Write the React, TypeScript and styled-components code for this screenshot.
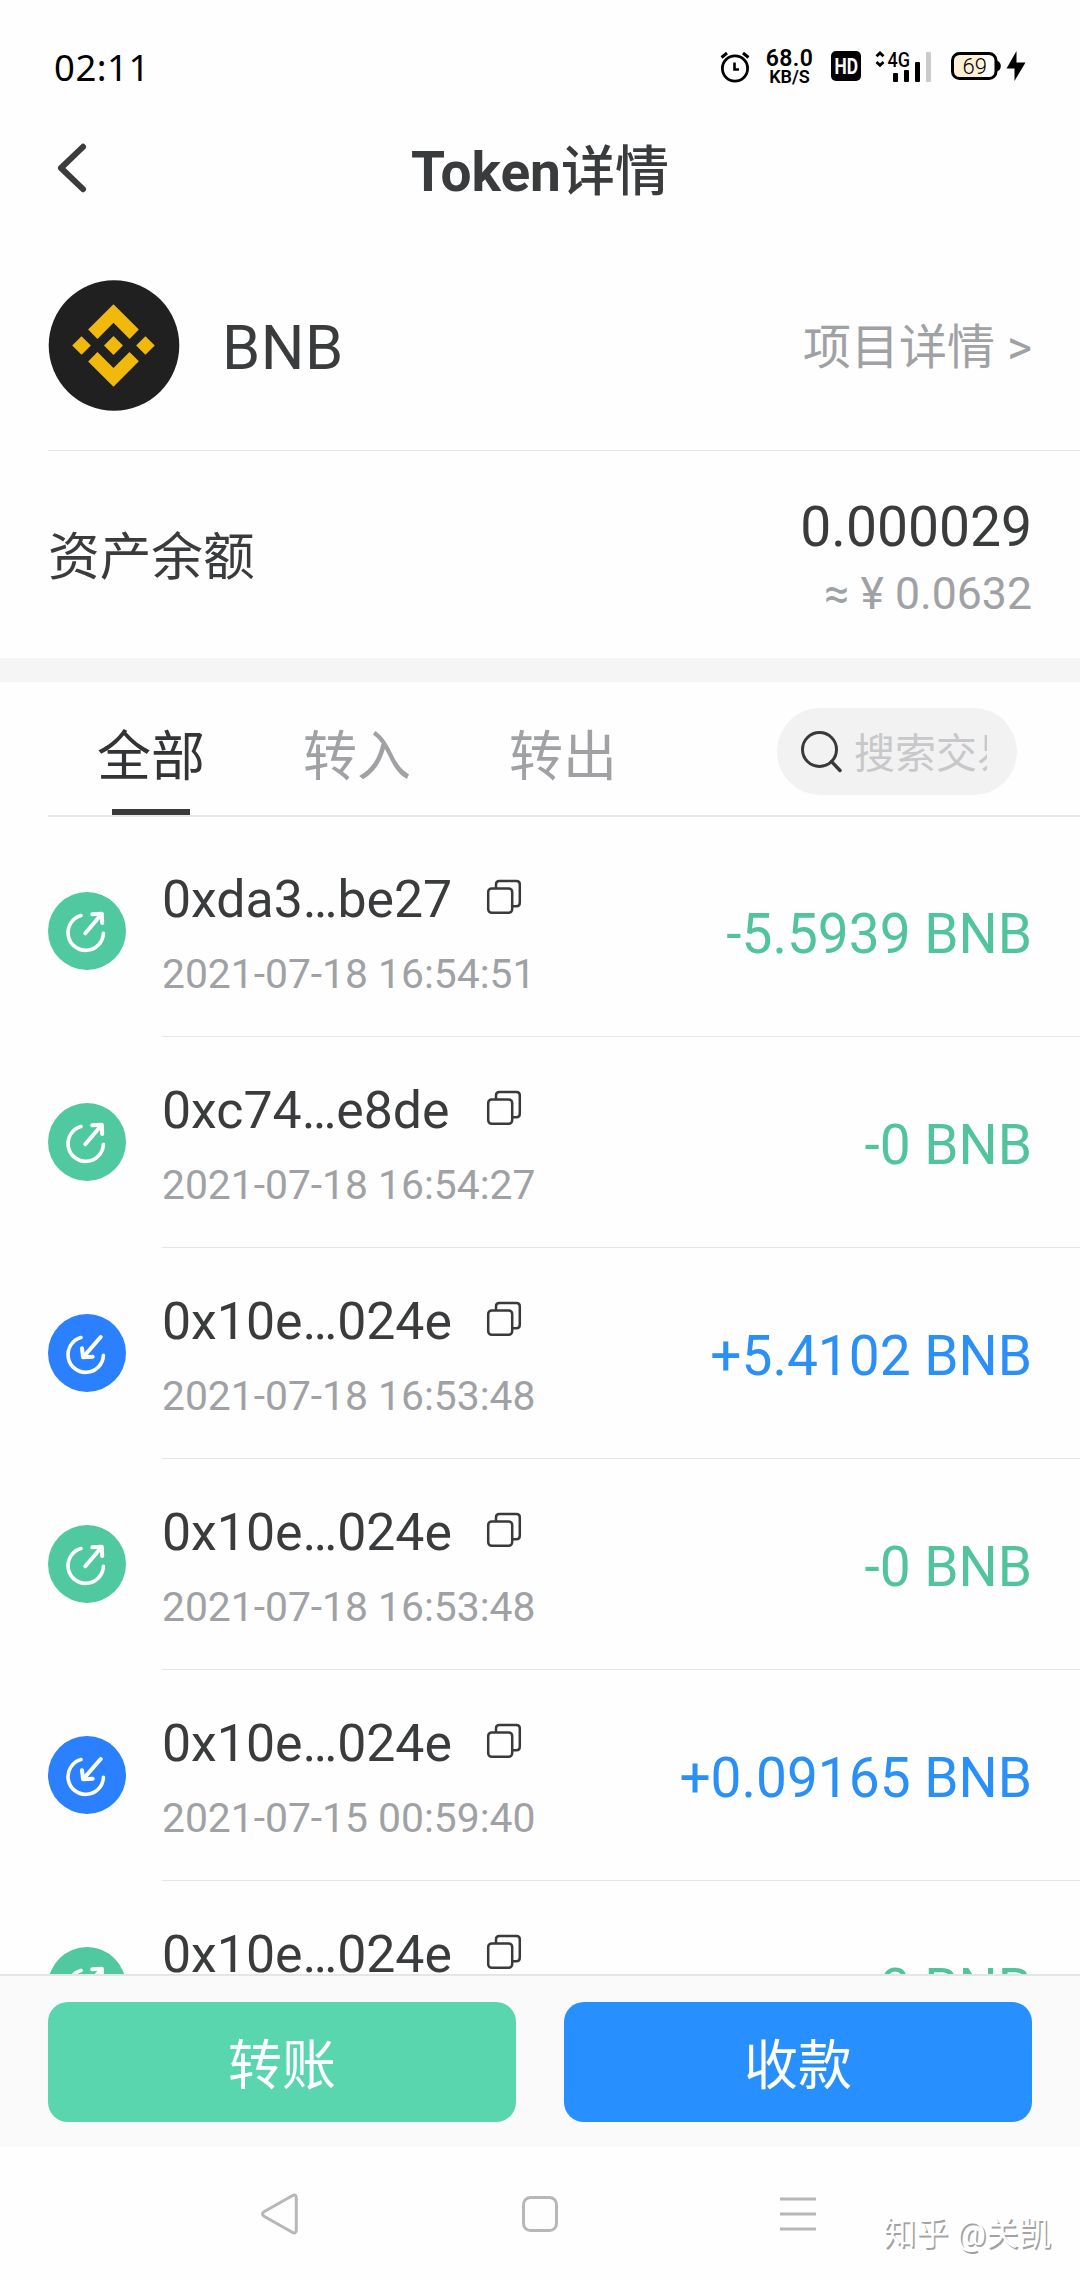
import React from 'react';
import styled, { createGlobalStyle } from 'styled-components';

const colors = {
  ink: '#3a3b3c',
  muted: '#a0a1a4',
  line: '#e6e6e7',
  green: '#52c49d',
  greenBadge: '#50c8a0',
  greenButton: '#59d6ad',
  blue: '#2a8ff6',
  blueBadge: '#2a80fe',
  blueButton: '#278ffe',
};

const GlobalStyle = createGlobalStyle`
  * { box-sizing: border-box; }
  body {
    margin: 0;
    background: #fefefe;
    font-family: Roboto, "Noto Sans CJK SC", sans-serif;
    color: ${colors.ink};
  }
  button { font: inherit; border: 0; padding: 0; background: none; color: inherit; }
  svg { display: block; flex: none; overflow: visible; }
`;

const Screen = styled.div`
  width: 1080px;
  height: 2280px;
  display: flex;
  flex-direction: column;
  overflow: hidden;
  background: #fefefe;
`;

const StatusBar = styled.header`
  height: 108px;
  flex: none;
  padding: 24px 54px 0 54px;
  display: flex;
  align-items: center;
  justify-content: space-between;
  color: #000;
`;

const Clock = styled.time`
  padding-top: 2px;
  font-family: "Noto Sans", sans-serif;
  font-size: 36.5px;
  line-height: 44px;
  letter-spacing: 0.5px;
`;

const StatusIcons = styled.div`
  display: flex;
  align-items: center;
`;

const NetRate = styled.div`
  width: 49px;
  margin: 0 17px 0 15px;
  display: flex;
  flex-direction: column;
  align-items: center;
  font-weight: 600;
  font-size: 23px;
  line-height: 20px;
  letter-spacing: 0.4px;
`;

const NetUnit = styled.span`
  font-size: 18px;
  line-height: 15px;
  letter-spacing: 0;
`;

const TitleBar = styled.div`
  height: 120px;
  flex: none;
  display: grid;
  grid-template-columns: 100px 1fr 100px;
  align-items: center;
`;

const BackButton = styled.button`
  padding-left: 56px;
`;

const Title = styled.h1`
  margin: 0;
  padding-top: 4px;
  text-align: center;
  font-size: 55px;
  line-height: 64px;
  font-weight: 700;
`;

const TitleHan = styled.span`
  font-family: "Noto Sans CJK SC", sans-serif;
  font-size: 54px;
  font-weight: 500;
`;

const TokenRow = styled.section`
  height: 223px;
  flex: none;
  margin-left: 48px;
  padding: 12px 48px 0 0;
  display: flex;
  align-items: center;
  border-bottom: 1px solid ${colors.line};
`;

const TokenName = styled.span`
  flex: 1;
  padding: 6px 0 0 43px;
  font-size: 61.3px;
  line-height: 72px;
  letter-spacing: 0.6px;
`;

const DetailLink = styled.span`
  padding-top: 6px;
  font-size: 48px;
  line-height: 60px;
  color: ${colors.muted};
`;

const BalanceRow = styled.section`
  height: 207px;
  flex: none;
  padding: 8px 48px 0;
  display: flex;
  align-items: center;
  justify-content: space-between;
`;

const BalanceLabel = styled.span`
  margin-top: -1px;
  font-size: 51.7px;
  line-height: 60px;
`;

const BalanceValues = styled.div`
  display: flex;
  flex-direction: column;
  align-items: flex-end;
  gap: 7px;
`;

const Balance = styled.span`
  font-size: 55.2px;
  line-height: 64px;
`;

const Fiat = styled.span`
  font-size: 44.6px;
  line-height: 56px;
  color: ${colors.muted};
`;

const Band = styled.div`
  height: 24px;
  flex: none;
  background: #f5f5f5;
`;

const FilterBar = styled.nav`
  height: 135px;
  flex: none;
  margin-left: 48px;
  padding-right: 63px;
  display: flex;
  align-items: stretch;
  border-bottom: 2px solid #e8e8e9;
`;

const Tab = styled.button<{ $active?: boolean }>`
  width: 206px;
  display: flex;
  flex-direction: column;
  align-items: center;
  justify-content: space-between;
  padding-top: 44px;
  font-size: 54px;
  line-height: 64px;
  color: ${(p) => (p.$active ? '#333435' : colors.muted)};

  &::after {
    content: '';
    width: 78px;
    height: 6px;
    background: ${(p) => (p.$active ? '#3a3a3a' : 'transparent')};
  }
`;

const SearchBox = styled.div`
  width: 240px;
  height: 87px;
  margin: 26px 0 0 auto;
  padding: 0 30px 0 22px;
  display: flex;
  align-items: center;
  border-radius: 44px;
  background: #f2f2f2;
`;

const Placeholder = styled.span`
  flex: 1;
  margin-left: 12px;
  overflow: hidden;
  white-space: nowrap;
  font-size: 41px;
  line-height: 52px;
  padding-top: 4px;
  color: #c8c8ca;
`;

const List = styled.ul`
  flex: 1;
  min-height: 0;
  margin: 0;
  padding: 9px 0 0 48px;
  overflow: hidden;
  list-style: none;
`;

const Item = styled.li`
  height: 211px;
  display: flex;
  align-items: flex-start;
  gap: 36px;
`;

const Badge = styled.span<{ $incoming: boolean }>`
  width: 78px;
  height: 78px;
  margin-top: 66px;
  flex: none;
  border-radius: 50%;
  background: ${(p) => (p.$incoming ? colors.blueBadge : colors.greenBadge)};
`;

const ItemBody = styled.div`
  flex: 1;
  height: 211px;
  padding-right: 48px;
  display: flex;
  justify-content: space-between;
  border-bottom: 1px solid ${colors.line};
`;

const ItemText = styled.div`
  padding-top: 44px;
  display: flex;
  flex-direction: column;
  gap: 20px;
`;

const HashLine = styled.div`
  height: 60px;
  display: grid;
  grid-template-columns: 324px auto;
  justify-content: start;
  align-items: start;
  font-size: 51.8px;
  line-height: 60px;

  svg { margin-top: 9px; }
`;

const Stamp = styled.span`
  font-size: 40.8px;
  line-height: 48px;
  color: ${colors.muted};
`;

const Amount = styled.span<{ $incoming: boolean }>`
  padding-top: 76px;
  font-size: 55px;
  line-height: 64px;
  color: ${(p) => (p.$incoming ? colors.blue : colors.green)};
`;

const Actions = styled.footer`
  height: 173px;
  flex: none;
  padding: 26px 48px;
  display: grid;
  grid-template-columns: 1fr 1fr;
  gap: 48px;
  border-top: 2px solid #e5e5e7;
  background: #fafafb;
`;

const ActionButton = styled.button<{ $tone: string }>`
  height: 120px;
  padding-top: 10px;
  border-radius: 20px;
  background: ${(p) => p.$tone};
  color: #fff;
  font-size: 54px;
  line-height: 64px;
`;

const SystemNav = styled.div`
  height: 133px;
  flex: none;
  position: relative;
  padding: 0 258px;
  display: flex;
  align-items: center;
  justify-content: space-between;
`;

const Watermark = styled.span`
  position: absolute;
  right: 29px;
  bottom: 24px;
  font-size: 32.6px;
  line-height: 44px;
  color: #fff;
  text-shadow: 1.6px 1.6px 0.5px #a2a2a2;
`;

const AlarmIcon = () => (
  <svg width="30" height="32" viewBox="0 0 30 32" fill="none" stroke="#000">
    <circle cx="15" cy="18.5" r="12.6" strokeWidth="2.8" />
    <path d="M14.5 12.5V19.5H19" strokeWidth="2.6" />
    <path d="M1.5 7.5L7 3M28.5 7.5L23 3" strokeWidth="3" />
  </svg>
);

const HdIcon = () => (
  <svg width="30" height="30" viewBox="0 0 30 30">
    <rect width="30" height="30" rx="5" />
    <text x="3.5" y="23" fill="#fff" fontFamily="Roboto" fontWeight="700" fontSize="22.5" textLength="23.5" lengthAdjust="spacingAndGlyphs">HD</text>
  </svg>
);

const SignalIcon = styled.svg`
  margin-left: 14px;
`;

const BatteryIcon = styled.svg`
  margin-left: 19px;
`;

const BoltIcon = styled.svg`
  margin-left: 5px;
`;

const Signal = () => (
  <SignalIcon width="57" height="32" viewBox="0 0 57 32">
    <path d="M1.5 6.3L5 3L8.5 6.3M1.5 12L5 15.3L8.5 12" fill="none" stroke="#000" strokeWidth="2.8" />
    <text x="12.5" y="16.5" fontFamily="Roboto" fontWeight="500" fontSize="20" textLength="22.5" lengthAdjust="spacingAndGlyphs">4G</text>
    <rect x="18" y="23" width="5" height="9" rx="1" />
    <rect x="29" y="20" width="5" height="12" rx="1" />
    <rect x="40" y="12" width="5" height="20" rx="1" />
    <rect x="51" y="2" width="5" height="30" rx="1" fill="#cbcbcb" />
  </SignalIcon>
);

const Battery = () => (
  <BatteryIcon width="50" height="28" viewBox="0 0 50 28">
    <path d="M8 2H31V26H8Q2 26 2 20V8Q2 2 8 2Z" fill="#fff0d6" />
    <rect x="1.5" y="1.5" width="43.5" height="25" rx="7" fill="none" stroke="#000" strokeWidth="3" />
    <path d="M46 8.5Q49.8 10 49.8 14T46 19.5Z" />
    <text x="11.5" y="21.5" fontFamily="Roboto" fontWeight="300" fontSize="22">69</text>
  </BatteryIcon>
);

const Bolt = () => (
  <BoltIcon width="20" height="30" viewBox="0 0 20 30">
    <path d="M10.5 0L0.5 17.5H8.5V30L19.5 11.5H10.5Z" />
  </BoltIcon>
);

const BackIcon = () => (
  <svg width="32" height="52" viewBox="0 0 32 52" fill="none" stroke={colors.ink} strokeWidth="6" strokeLinecap="round" strokeLinejoin="round">
    <path d="M27 4.8L5 26L27 47.2" />
  </svg>
);

const TokenLogo = () => (
  <svg width="131" height="131" viewBox="0 0 131 131">
    <circle cx="66" cy="65.5" r="65.3" fill="#202020" />
    <g fill="#f0b90b" transform="translate(24.2 24.2) scale(0.652)">
      <path d="M38.73 53.2L63.32 28.62L87.92 53.22L102.22 38.91L63.32 0L24.42 38.9Z" />
      <path d="M0 63.31L14.3 49L28.61 63.31L14.3 77.61Z" />
      <path d="M38.73 73.41L63.32 98L87.92 73.4L102.23 87.69L63.33 126.6L24.42 87.72Z" />
      <path d="M98 63.31L112.3 49L126.61 63.3L112.3 77.62Z" />
      <path d="M77.83 63.3L63.32 48.78L48.81 63.28L63.32 77.78Z" />
    </g>
  </svg>
);

const SearchIcon = () => (
  <svg width="43" height="43" viewBox="0 0 43 43" fill="none" stroke="#39393b" strokeWidth="3" strokeLinecap="round">
    <circle cx="20.5" cy="19.5" r="17" />
    <path d="M32.6 31.6L41 40.5" strokeWidth="3.4" />
  </svg>
);

const CopyIcon = () => (
  <svg width="36" height="36" viewBox="0 0 36 36" fill="none" stroke="#3a3a3b" strokeWidth="2.5" strokeLinejoin="round">
    <rect x="2.2" y="9.4" width="24" height="24.4" rx="3.6" />
    <path d="M10 9.4V5.4Q10 2 13.4 2H30.4Q33.8 2 33.8 5.4V23.4Q33.8 27.2 30.4 27.2H26.4" />
  </svg>
);

const DirectionIcon = ({ incoming }: { incoming: boolean }) => (
  <svg width="78" height="78" viewBox="0 0 78 78" fill="none" stroke="#fff" strokeWidth="4" strokeLinecap="round" strokeLinejoin="round">
    <path d="M33 23.6A17.7 17.7 0 1 0 55.4 41.4" strokeWidth="3.6" />
    {incoming ? (
      <path d="M52.7 23L35.6 42.6M34 34.3L35 43.3L44.7 42.7" />
    ) : (
      <path d="M37.3 41.3L53 22.7M44.3 22.3L53.8 21.7L54.2 31" />
    )}
  </svg>
);

const NavBackIcon = () => (
  <svg width="42" height="44" viewBox="0 0 42 44" fill="none" stroke="#b7b7b7" strokeWidth="3" strokeLinejoin="round">
    <path d="M34.2 3.7Q38.3 1.8 38.3 6V38Q38.3 42.2 34.2 40.3L6 24.2Q3 22 6 19.8Z" />
  </svg>
);

const NavHomeIcon = () => (
  <svg width="36" height="36" viewBox="0 0 36 36" fill="none" stroke="#b7b7b7" strokeWidth="3">
    <rect x="1.5" y="1.5" width="33" height="33" rx="7" />
  </svg>
);

const NavMenuIcon = () => (
  <svg width="42" height="34" viewBox="0 0 42 34" stroke="#b7b7b7" strokeWidth="3">
    <path d="M0 2H36M0 17H36M0 32H36" />
  </svg>
);

interface Transfer {
  hash: string;
  time: string;
  amount: string;
}

const transfers: Transfer[] = [
  { hash: '0xda3…be27', time: '2021-07-18 16:54:51', amount: '-5.5939 BNB' },
  { hash: '0xc74…e8de', time: '2021-07-18 16:54:27', amount: '-0 BNB' },
  { hash: '0x10e…024e', time: '2021-07-18 16:53:48', amount: '+5.4102 BNB' },
  { hash: '0x10e…024e', time: '2021-07-18 16:53:48', amount: '-0 BNB' },
  { hash: '0x10e…024e', time: '2021-07-15 00:59:40', amount: '+0.09165 BNB' },
  { hash: '0x10e…024e', time: '', amount: '-0 BNB' },
];

const TransferItem = ({ hash, time, amount }: Transfer) => {
  const incoming = amount.startsWith('+');
  return (
    <Item>
      <Badge $incoming={incoming}>
        <DirectionIcon incoming={incoming} />
      </Badge>
      <ItemBody>
        <ItemText>
          <HashLine>
            <span>{hash}</span>
            <CopyIcon />
          </HashLine>
          <Stamp>{time}</Stamp>
        </ItemText>
        <Amount $incoming={incoming}>{amount}</Amount>
      </ItemBody>
    </Item>
  );
};

export default function App() {
  return (
    <Screen lang="zh-CN">
      <GlobalStyle />
      <StatusBar>
        <Clock>02:11</Clock>
        <StatusIcons>
          <AlarmIcon />
          <NetRate>
            68.0
            <NetUnit>KB/S</NetUnit>
          </NetRate>
          <HdIcon />
          <Signal />
          <Battery />
          <Bolt />
        </StatusIcons>
      </StatusBar>
      <TitleBar>
        <BackButton aria-label="返回">
          <BackIcon />
        </BackButton>
        <Title>
          Token<TitleHan>详情</TitleHan>
        </Title>
      </TitleBar>
      <TokenRow>
        <TokenLogo />
        <TokenName>BNB</TokenName>
        <DetailLink>项目详情 &gt;</DetailLink>
      </TokenRow>
      <BalanceRow>
        <BalanceLabel>资产余额</BalanceLabel>
        <BalanceValues>
          <Balance>0.000029</Balance>
          <Fiat>≈ ¥ 0.0632</Fiat>
        </BalanceValues>
      </BalanceRow>
      <Band />
      <FilterBar>
        <Tab $active>全部</Tab>
        <Tab>转入</Tab>
        <Tab>转出</Tab>
        <SearchBox>
          <SearchIcon />
          <Placeholder>搜索交易</Placeholder>
        </SearchBox>
      </FilterBar>
      <List>
        {transfers.map((transfer, index) => (
          <TransferItem key={index} {...transfer} />
        ))}
      </List>
      <Actions>
        <ActionButton $tone={colors.greenButton}>转账</ActionButton>
        <ActionButton $tone={colors.blueButton}>收款</ActionButton>
      </Actions>
      <SystemNav>
        <NavBackIcon />
        <NavHomeIcon />
        <NavMenuIcon />
        <Watermark>知乎 @关凯</Watermark>
      </SystemNav>
    </Screen>
  );
}
